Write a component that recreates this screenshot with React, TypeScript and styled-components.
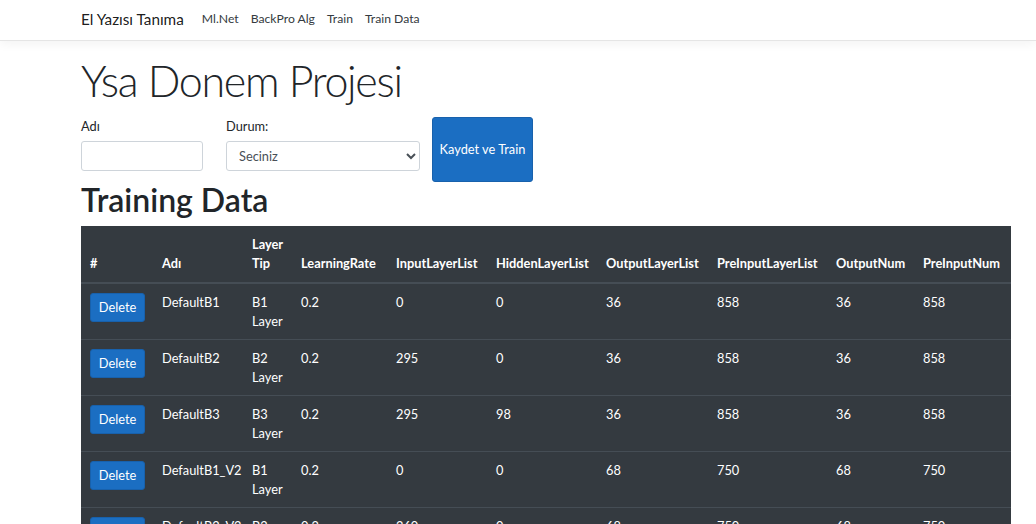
import React from "react";
import styled, { createGlobalStyle } from "styled-components";

const Global = createGlobalStyle`
  html, body { margin: 0; padding: 0; background: #fff; }
  body {
    font-family: "Segoe UI", Lato, "Noto Sans", sans-serif;
    font-size: 12.8px;
    line-height: 1.5;
    color: #212529;
  }
  * { box-sizing: border-box; }
`;

const Navbar = styled.nav`
  height: 41px;
  border-bottom: 1px solid #e5e5e5;
  box-shadow: 0 3px 10px rgba(0, 0, 0, 0.05);
  background: #fff;
  margin-bottom: 13px;
`;

const NavInner = styled.div`
  height: 39px;
  padding-left: 81px;
  display: flex;
  align-items: center;
`;

const Brand = styled.a`
  font-size: 15.3px;
  color: rgba(0, 0, 0, 0.9);
  text-decoration: none;
  margin-right: 12px;
`;

const NavLinks = styled.div`
  display: flex;
`;

const NavLink = styled.a`
  font-size: 12.2px;
  color: #343a40;
  text-decoration: none;
  padding: 0 6px;
`;

const Container = styled.main`
  padding-left: 81px;
  padding-right: 25px;
`;

const Display = styled.h1`
  font-size: 43px;
  font-weight: 300;
  letter-spacing: -1.3px;
  line-height: 1.2;
  margin: 0 0 9px 0;
  height: 54px;
  padding-top: 1px;
`;

const FormRow = styled.div`
  display: flex;
  align-items: flex-start;
  height: 64px;
`;

const Field = styled.div<{ $w: number; $mr: number }>`
  width: ${(p) => p.$w}px;
  margin-right: ${(p) => p.$mr}px;
  display: flex;
  flex-direction: column;
`;

const Label = styled.label`
  display: block;
  line-height: 19px;
  margin-bottom: 5px;
  color: #212529;
`;

const TextInput = styled.input`
  height: 30px;
  width: 100%;
  border: 1px solid #ced4da;
  border-radius: 3px;
  padding: 0 10px;
  font: inherit;
  color: #495057;
  background: #fff;
`;

const Select = styled.select`
  height: 30px;
  width: 100%;
  border: 1px solid #ced4da;
  border-radius: 3px;
  padding: 0 6px 0 8px;
  font: inherit;
  color: #495057;
  background: #fff;
`;

const PrimaryButton = styled.button<{ $w?: number; $h?: number }>`
  background: #1b6ec2;
  border: 1px solid #1861ac;
  border-radius: 3px;
  color: #fff;
  font: inherit;
  font-size: 12.8px;
  width: ${(p) => (p.$w ? `${p.$w}px` : "auto")};
  height: ${(p) => (p.$h ? `${p.$h}px` : "auto")};
  padding: 0;
  display: inline-flex;
  align-items: center;
  justify-content: center;
  cursor: pointer;
`;

const Heading = styled.h2`
  font-size: 32px;
  font-weight: 600;
  line-height: 1.2;
  margin: 0 0 6px 0;
  height: 39px;
`;

const Table = styled.table`
  width: 930px;
  table-layout: fixed;
  border-collapse: collapse;
  background: #343a40;
  color: #fff;
`;

const Th = styled.th`
  text-align: left;
  vertical-align: bottom;
  font-weight: 700;
  padding: 9px 9.6px 9px 9px;
  line-height: 19px;
  border-bottom: 2px solid #454d55;
  height: 54px;
`;

const Tr = styled.tr`
  border-top: 1px solid #454d55;
`;

const Td = styled.td`
  vertical-align: top;
  padding: 9px 9.6px 8px 9px;
  line-height: 19px;
  height: 56px;
`;

const cols = [72, 90, 49, 95, 100, 110, 111, 119, 87, 97];
const headers = [
  "#",
  "Adı",
  "Layer Tip",
  "LearningRate",
  "InputLayerList",
  "HiddenLayerList",
  "OutputLayerList",
  "PreInputLayerList",
  "OutputNum",
  "PreInputNum",
];

const rows = [
  ["DefaultB1", "B1 Layer", "0.2", "0", "0", "36", "858", "36", "858"],
  ["DefaultB2", "B2 Layer", "0.2", "295", "0", "36", "858", "36", "858"],
  ["DefaultB3", "B3 Layer", "0.2", "295", "98", "36", "858", "36", "858"],
  ["DefaultB1_V2", "B1 Layer", "0.2", "0", "0", "68", "750", "68", "750"],
  ["DefaultB2_V2", "B2 Layer", "0.2", "260", "0", "68", "750", "68", "750"],
];

export default function App() {
  return (
    <>
      <Global />
      <Navbar>
        <NavInner>
          <Brand href="#">El Yazısı Tanıma</Brand>
          <NavLinks>
            <NavLink href="#">Ml.Net</NavLink>
            <NavLink href="#">BackPro Alg</NavLink>
            <NavLink href="#">Train</NavLink>
            <NavLink href="#">Train Data</NavLink>
          </NavLinks>
        </NavInner>
      </Navbar>
      <Container>
        <Display>Ysa Donem Projesi</Display>
        <FormRow>
          <Field $w={122} $mr={23}>
            <Label>Adı</Label>
            <TextInput type="text" />
          </Field>
          <Field $w={194} $mr={12}>
            <Label>Durum:</Label>
            <Select defaultValue="">
              <option value="">Seciniz</option>
            </Select>
          </Field>
          <PrimaryButton $w={101} $h={65}>
            Kaydet ve Train
          </PrimaryButton>
        </FormRow>
        <Heading>Training Data</Heading>
        <Table>
          <colgroup>
            {cols.map((w, i) => (
              <col key={i} style={{ width: w }} />
            ))}
          </colgroup>
          <thead>
            <tr>
              {headers.map((h) => (
                <Th key={h}>{h}</Th>
              ))}
            </tr>
          </thead>
          <tbody>
            {rows.map((r) => (
              <Tr key={r[0]}>
                <Td>
                  <PrimaryButton $w={55} $h={29}>
                    Delete
                  </PrimaryButton>
                </Td>
                {r.map((c, i) => (
                  <Td key={i}>{c}</Td>
                ))}
              </Tr>
            ))}
          </tbody>
        </Table>
      </Container>
    </>
  );
}
